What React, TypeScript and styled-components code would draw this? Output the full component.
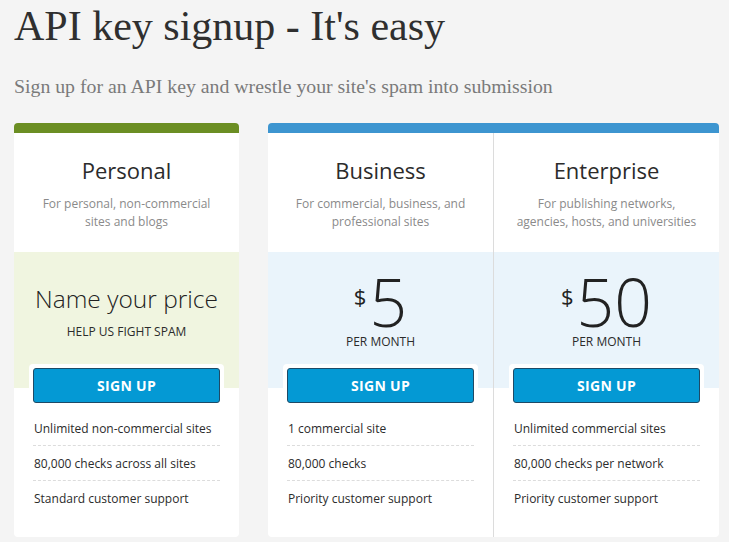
import React from "react";
import styled, { createGlobalStyle } from "styled-components";

const GlobalStyle = createGlobalStyle`
	html, body {
		margin: 0;
		padding: 0;
		background: #f4f4f4;
	}
	body {
		font-family: "Open Sans", "Liberation Sans", sans-serif;
		color: #333;
	}
`;

const Page = styled.div`
	padding: 0 14px;
	width: 705px;
`;

const Title = styled.h1`
	margin: 0;
	padding-top: 2px;
	font-family: "Liberation Serif", "DejaVu Serif", serif;
	font-weight: normal;
	font-size: 42px;
	line-height: 48px;
	color: #2f2f2f;
`;

const Subtitle = styled.p`
	margin: 24px 0 0;
	font-family: "Liberation Serif", "DejaVu Serif", serif;
	font-size: 19.8px;
	line-height: 24px;
	color: #7a7a7a;
`;

const Plans = styled.div`
	display: flex;
	align-items: flex-start;
	gap: 29px;
	margin-top: 25px;
`;

type CardProps = { $accent: string; $width: number };

const Card = styled.div<CardProps>`
	width: ${(p) => p.$width}px;
	background: #fff;
	border-top: 10px solid ${(p) => p.$accent};
	border-radius: 4px;
	display: flex;
	overflow: hidden;
`;

const Column = styled.div<{ $divider?: boolean }>`
	flex: 1;
	display: flex;
	flex-direction: column;
	border-left: ${(p) => (p.$divider ? "1px solid #dcdcdc" : "none")};
`;

const Header = styled.div`
	height: 119px;
	box-sizing: border-box;
	padding-top: 22px;
	text-align: center;
`;

const PlanName = styled.h2`
	margin: 0;
	font-size: 22px;
	line-height: 30px;
	font-weight: normal;
	color: #2b2b2b;
`;

const PlanDesc = styled.p`
	margin: 10px 0 0;
	font-size: 12px;
	line-height: 18px;
	color: #8a8a8a;
`;

const PriceArea = styled.div<{ $tint: string }>`
	height: 136px;
	box-sizing: border-box;
	padding-bottom: 14px;
	background: ${(p) => p.$tint};
	display: flex;
	flex-direction: column;
	align-items: center;
	justify-content: center;
	text-align: center;
`;

const NameYourPrice = styled.div`
	margin-top: -4px;
	font-size: 24.5px;
	font-weight: 300;
	line-height: 34px;
	color: #222;
`;

const Amount = styled.div`
	display: flex;
	align-items: flex-start;
	justify-content: center;
	font-weight: 300;
	font-size: 66px;
	line-height: 52px;
	height: 52px;
	color: #222;
`;

const Currency = styled.span`
	font-size: 22px;
	line-height: 22px;
	margin: 10px 3px 0 0;
	font-weight: 400;
`;

const Caption = styled.div<{ $gap: number }>`
	font-size: 12px;
	line-height: 18px;
	text-transform: uppercase;
	color: #2b2b2b;
	margin-top: ${(p) => p.$gap}px;
`;

const ButtonWrap = styled.div`
	margin: -24px 15px 0;
	padding: 4px;
	background: #fff;
	border-radius: 4px;
`;

const Button = styled.button`
	display: block;
	width: 100%;
	height: 35px;
	box-sizing: border-box;
	background: #0499d4;
	border: 1px solid #1e4a66;
	border-radius: 3px;
	color: #fff;
	font-family: "Open Sans", "Liberation Sans", sans-serif;
	font-weight: 700;
	font-size: 14px;
	letter-spacing: 0.3px;
	cursor: pointer;
`;

const Features = styled.ul`
	list-style: none;
	margin: 4px 19px 21px;
	padding: 0;
`;

const Feature = styled.li`
	height: 35px;
	box-sizing: border-box;
	display: flex;
	align-items: center;
	font-size: 12px;
	color: #2b2b2b;
	padding-left: 1px;
	border-bottom: 1px dashed #dcdcdc;

	&:last-child {
		border-bottom: none;
	}
`;

type Plan = {
	name: string;
	desc: [string, string];
	price?: string;
	features: string[];
};

const paid: Plan[] = [
	{
		name: "Business",
		desc: ["For commercial, business, and", "professional sites"],
		price: "5",
		features: ["1 commercial site", "80,000 checks", "Priority customer support"],
	},
	{
		name: "Enterprise",
		desc: ["For publishing networks,", "agencies, hosts, and universities"],
		price: "50",
		features: [
			"Unlimited commercial sites",
			"80,000 checks per network",
			"Priority customer support",
		],
	},
];

const PlanHeader: React.FC<{ plan: Plan }> = ({ plan }) => (
	<Header>
		<PlanName>{plan.name}</PlanName>
		<PlanDesc>
			{plan.desc[0]}
			<br />
			{plan.desc[1]}
		</PlanDesc>
	</Header>
);

const PlanFooter: React.FC<{ plan: Plan }> = ({ plan }) => (
	<>
		<ButtonWrap>
			<Button>SIGN UP</Button>
		</ButtonWrap>
		<Features>
			{plan.features.map((f) => (
				<Feature key={f}>{f}</Feature>
			))}
		</Features>
	</>
);

const personal: Plan = {
	name: "Personal",
	desc: ["For personal, non-commercial", "sites and blogs"],
	features: [
		"Unlimited non-commercial sites",
		"80,000 checks across all sites",
		"Standard customer support",
	],
};

export default function App() {
	return (
		<Page>
			<GlobalStyle />
			<Title>API key signup - It's easy</Title>
			<Subtitle>Sign up for an API key and wrestle your site's spam into submission</Subtitle>
			<Plans>
				<Card $accent="#6b8e23" $width={225}>
					<Column>
						<PlanHeader plan={personal} />
						<PriceArea $tint="#f0f5e0">
							<NameYourPrice>Name your price</NameYourPrice>
							<Caption $gap={7}>Help us fight spam</Caption>
						</PriceArea>
						<PlanFooter plan={personal} />
					</Column>
				</Card>
				<Card $accent="#3d95d0" $width={451}>
					{paid.map((plan, i) => (
						<Column key={plan.name} $divider={i > 0}>
							<PlanHeader plan={plan} />
							<PriceArea $tint="#eaf4fb">
								<Amount>
									<Currency>$</Currency>
									{plan.price}
								</Amount>
								<Caption $gap={6}>Per month</Caption>
							</PriceArea>
							<PlanFooter plan={plan} />
						</Column>
					))}
				</Card>
			</Plans>
		</Page>
	);
}
